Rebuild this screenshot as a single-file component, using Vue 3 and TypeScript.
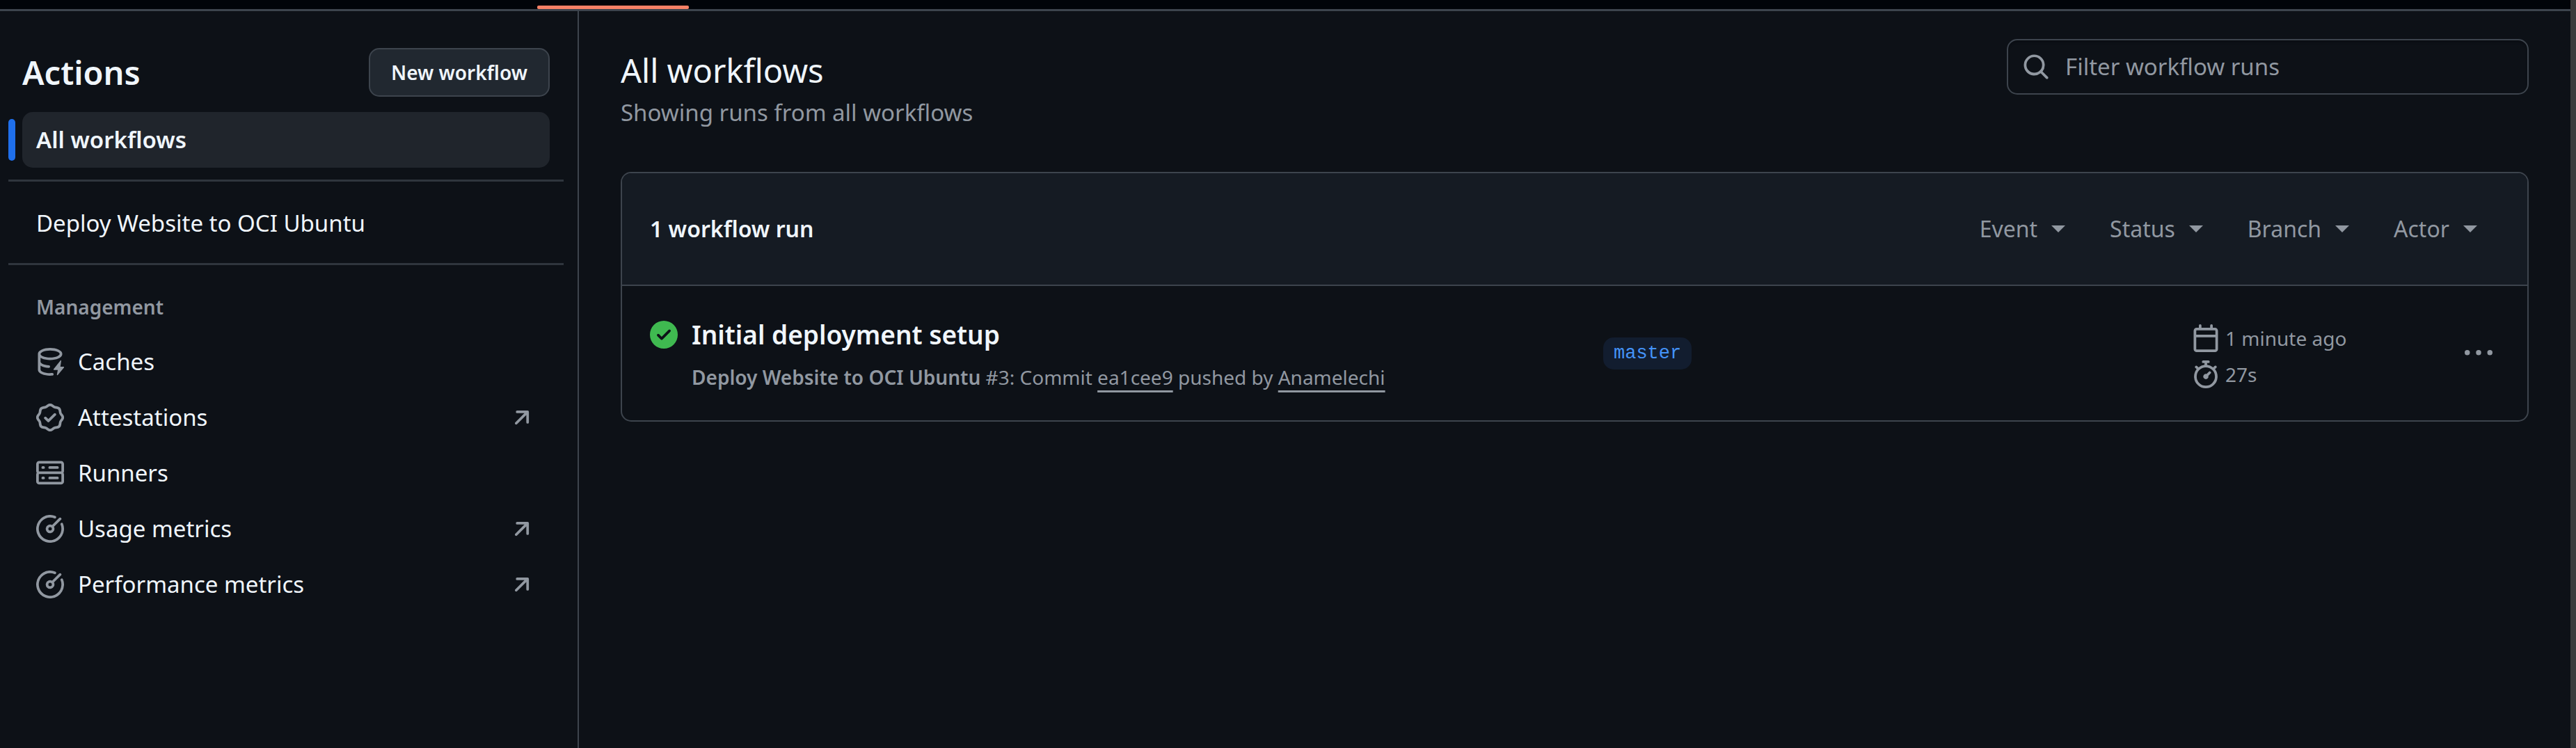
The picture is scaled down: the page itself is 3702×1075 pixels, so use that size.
<script setup lang="ts">
import { ref } from 'vue'

interface ManagementLink {
  label: string
  icon: string
  external: boolean
}

const icons: Record<string, string> = {
  cache:
    'M2.5 5.724V8c0 .248.238.7 1.169 1.159.874.43 2.144.745 3.62.822a.75.75 0 1 1-.078 1.498c-1.622-.085-3.102-.432-4.204-.975a5.565 5.565 0 0 1-.507-.28V12.5c0 .133.058.318.282.551.227.237.591.483 1.101.707 1.015.447 2.47.742 4.117.742.406 0 .802-.018 1.183-.052a.751.751 0 1 1 .134 1.494C8.89 15.98 8.45 16 8 16c-1.805 0-3.475-.32-4.721-.869-.623-.274-1.173-.619-1.579-1.041-.408-.425-.7-.964-.7-1.59v-9c0-.626.292-1.165.7-1.591.406-.42.956-.766 1.579-1.04C4.525.32 6.195 0 8 0c1.806 0 3.476.32 4.721.869.623.274 1.173.619 1.579 1.041.408.425.7.964.7 1.59 0 .626-.292 1.165-.7 1.591-.406.42-.956.766-1.578 1.04C11.475 6.68 9.805 7 8 7c-1.805 0-3.475-.32-4.721-.869a6.15 6.15 0 0 1-.779-.407Zm0-2.224c0 .133.058.318.282.551.227.237.591.483 1.101.707C4.898 5.205 6.353 5.5 8 5.5c1.646 0 3.101-.295 4.118-.742.508-.224.873-.471 1.1-.708.224-.232.282-.417.282-.55 0-.133-.058-.318-.282-.551-.227-.237-.591-.483-1.101-.707C11.102 1.795 9.647 1.5 8 1.5c-1.646 0-3.101.295-4.118.742-.508.224-.873.471-1.1.708-.224.232-.282.417-.282.55Zm11.5 3.7-4 5q-.2.5.3.5h2.1l-.5 2.7q.1.5.5.2l3.6-4.3q.2-.5-.3-.5h-1.8l.5-3.4q-.1-.4-.4-.2Z',
  verified:
    'm9.585.52.929.68c.153.112.331.186.518.215l1.138.175a2.678 2.678 0 0 1 2.24 2.24l.174 1.139c.029.187.103.365.215.518l.68.928a2.677 2.677 0 0 1 0 3.17l-.68.928a1.174 1.174 0 0 0-.215.518l-.175 1.138a2.678 2.678 0 0 1-2.241 2.241l-1.138.175a1.17 1.17 0 0 0-.518.215l-.928.68a2.677 2.677 0 0 1-3.17 0l-.928-.68a1.174 1.174 0 0 0-.518-.215L3.83 14.41a2.678 2.678 0 0 1-2.24-2.24l-.175-1.138a1.17 1.17 0 0 0-.215-.518l-.68-.928a2.677 2.677 0 0 1 0-3.17l.68-.928c.112-.153.186-.331.215-.518l.175-1.14a2.678 2.678 0 0 1 2.24-2.24l1.139-.175c.187-.029.365-.103.518-.215l.928-.68a2.677 2.677 0 0 1 3.17 0ZM7.303 1.728l-.927.68a2.67 2.67 0 0 1-1.18.489l-1.137.174a1.179 1.179 0 0 0-.987.987l-.174 1.136a2.677 2.677 0 0 1-.489 1.18l-.68.928a1.18 1.18 0 0 0 0 1.394l.68.927c.256.348.424.753.489 1.18l.174 1.137c.078.509.478.909.987.987l1.136.174a2.67 2.67 0 0 1 1.18.489l.928.68c.414.305.979.305 1.394 0l.927-.68a2.67 2.67 0 0 1 1.18-.489l1.137-.174a1.18 1.18 0 0 0 .987-.987l.174-1.136a2.67 2.67 0 0 1 .489-1.18l.68-.928a1.176 1.176 0 0 0 0-1.394l-.68-.927a2.686 2.686 0 0 1-.489-1.18l-.174-1.137a1.179 1.179 0 0 0-.987-.987l-1.136-.174a2.677 2.677 0 0 1-1.18-.489l-.928-.68a1.176 1.176 0 0 0-1.394 0ZM11.28 6.78l-3.75 3.75a.75.75 0 0 1-1.06 0L4.72 8.78a.751.751 0 0 1 .018-1.042.751.751 0 0 1 1.042-.018L7 8.94l3.22-3.22a.751.751 0 0 1 1.042.018.751.751 0 0 1 .018 1.042Z',
  server:
    'M1.75 1h12.5c.966 0 1.75.784 1.75 1.75v4c0 .372-.116.717-.314 1 .198.283.314.628.314 1v4a1.75 1.75 0 0 1-1.75 1.75H1.75A1.75 1.75 0 0 1 0 12.75v-4c0-.358.109-.707.314-1a1.739 1.739 0 0 1-.314-1v-4C0 1.784.784 1 1.75 1ZM1.5 2.75v4c0 .138.112.25.25.25h12.5a.25.25 0 0 0 .25-.25v-4a.25.25 0 0 0-.25-.25H1.75a.25.25 0 0 0-.25.25Zm.25 5.75a.25.25 0 0 0-.25.25v4c0 .138.112.25.25.25h12.5a.25.25 0 0 0 .25-.25v-4a.25.25 0 0 0-.25-.25ZM7 4.75A.75.75 0 0 1 7.75 4h4.5a.75.75 0 0 1 0 1.5h-4.5A.75.75 0 0 1 7 4.75ZM7.75 10h4.5a.75.75 0 0 1 0 1.5h-4.5a.75.75 0 0 1 0-1.5ZM3 4.75A.75.75 0 0 1 3.75 4h.5a.75.75 0 0 1 0 1.5h-.5A.75.75 0 0 1 3 4.75ZM3.75 10h.5a.75.75 0 0 1 0 1.5h-.5a.75.75 0 0 1 0-1.5Z',
  meter:
    'M8 1.5a6.5 6.5 0 1 0 6.016 4.035.75.75 0 0 1 1.388-.57 8 8 0 1 1-4.37-4.37.75.75 0 0 1-.569 1.389A6.473 6.473 0 0 0 8 1.5Zm6.28.22a.75.75 0 0 1 0 1.06l-4.063 4.064a2.5 2.5 0 1 1-1.06-1.06L13.22 1.72a.75.75 0 0 1 1.06 0ZM7 8a1 1 0 1 0 2 0 1 1 0 0 0-2 0Z',
  arrow:
    'M4.53 4.75A.75.75 0 0 1 5.28 4h6.01a.75.75 0 0 1 .75.75v6.01a.75.75 0 0 1-1.5 0v-4.2l-5.26 5.261a.749.749 0 0 1-1.275-.326.749.749 0 0 1 .215-.734L9.48 5.5h-4.2a.75.75 0 0 1-.75-.75Z',
  search:
    'M10.68 11.74a6 6 0 0 1-7.922-8.982 6 6 0 0 1 8.982 7.922l3.04 3.04a.749.749 0 0 1-.326 1.275.749.749 0 0 1-.734-.215ZM11.5 7a4.499 4.499 0 1 0-8.997 0A4.499 4.499 0 0 0 11.5 7Z',
  success:
    'M8 16A8 8 0 1 1 8 0a8 8 0 0 1 0 16Zm3.78-9.72a.751.751 0 0 0-.018-1.042.751.751 0 0 0-1.042-.018L6.75 9.19 5.28 7.72a.751.751 0 0 0-1.042.018.751.751 0 0 0-.018 1.042l2 2a.75.75 0 0 0 1.06 0Z',
  calendar:
    'M4.75 0a.75.75 0 0 1 .75.75V2h5V.75a.75.75 0 0 1 1.5 0V2h1.25c.966 0 1.75.784 1.75 1.75v10.5A1.75 1.75 0 0 1 13.25 16H2.75A1.75 1.75 0 0 1 1 14.25V3.75C1 2.784 1.784 2 2.75 2H4V.75A.75.75 0 0 1 4.75 0ZM2.5 7.5v6.75c0 .138.112.25.25.25h10.5a.25.25 0 0 0 .25-.25V7.5Zm10.75-4H2.75a.25.25 0 0 0-.25.25V6h11V3.75a.25.25 0 0 0-.25-.25Z',
  stopwatch:
    'M5.75.75A.75.75 0 0 1 6.5 0h3a.75.75 0 0 1 0 1.5h-.75v1l-.001.041a6.724 6.724 0 0 1 3.464 1.435l.007-.006.75-.75a.749.749 0 0 1 1.275.326.749.749 0 0 1-.215.734l-.75.75-.006.007a6.75 6.75 0 1 1-10.548 0L2.72 5.03l-.75-.75a.751.751 0 0 1 .018-1.042.751.751 0 0 1 1.042-.018l.75.75.007.006A6.72 6.72 0 0 1 7.25 2.541V1.5H6.5a.75.75 0 0 1-.75-.75ZM8 14.5a5.25 5.25 0 1 0-.001-10.501A5.25 5.25 0 0 0 8 14.5Zm.389-6.7 1.33-1.33a.75.75 0 1 1 1.061 1.06L9.45 8.861A1.503 1.503 0 0 1 8 10.75a1.499 1.499 0 1 1 .389-2.95Z',
  kebab:
    'M8 9a1.5 1.5 0 1 0 0-3 1.5 1.5 0 0 0 0 3ZM1.5 9a1.5 1.5 0 1 0 0-3 1.5 1.5 0 0 0 0 3Zm13 0a1.5 1.5 0 1 0 0-3 1.5 1.5 0 0 0 0 3Z',
}

const management: ManagementLink[] = [
  { label: 'Caches', icon: 'cache', external: false },
  { label: 'Attestations', icon: 'verified', external: true },
  { label: 'Runners', icon: 'server', external: false },
  { label: 'Usage metrics', icon: 'meter', external: true },
  { label: 'Performance metrics', icon: 'meter', external: true },
]

const filters: string[] = ['Event', 'Status', 'Branch', 'Actor']
const query = ref('')
</script>

<template>
  <div class="window">
    <div class="page">
      <div class="tabs"><span class="tab-marker"></span></div>
      <div class="body">
        <aside class="sidebar">
          <header class="side-head">
            <h2 class="side-title">Actions</h2>
            <button type="button" class="new-button">New workflow</button>
          </header>
          <nav class="side-nav" aria-label="Actions">
            <a href="#" class="item current" aria-current="page">All workflows</a>
            <hr class="divider" />
            <a href="#" class="item">Deploy Website to OCI Ubuntu</a>
            <hr class="divider" />
            <h3 class="group-title">Management</h3>
            <a v-for="link in management" :key="link.label" href="#" class="item">
              <svg class="icon" viewBox="0 0 16 16" aria-hidden="true"><path :d="icons[link.icon]" /></svg>
              <span class="item-label">{{ link.label }}</span>
              <svg v-if="link.external" class="icon" viewBox="0 0 16 16" aria-hidden="true">
                <path :d="icons.arrow" />
              </svg>
            </a>
          </nav>
        </aside>

        <main class="main">
          <header class="main-head">
            <div class="headings">
              <h1 class="title">All workflows</h1>
              <p class="subtitle">Showing runs from all workflows</p>
            </div>
            <label class="search">
              <svg class="icon" viewBox="0 0 16 16" aria-hidden="true"><path :d="icons.search" /></svg>
              <input
                v-model="query"
                class="search-input"
                type="text"
                placeholder="Filter workflow runs"
                aria-label="Filter workflow runs"
              />
            </label>
          </header>

          <section class="runs">
            <header class="runs-head">
              <strong class="count">1 workflow run</strong>
              <div class="filters">
                <button v-for="name in filters" :key="name" type="button" class="filter">
                  {{ name }}<span class="caret"></span>
                </button>
              </div>
            </header>
            <article class="run">
              <div class="run-info">
                <svg class="icon success" viewBox="0 0 16 16" role="img" aria-label="completed successfully">
                  <path :d="icons.success" />
                </svg>
                <div class="run-text">
                  <a href="#" class="run-title">Initial deployment setup</a>
                  <p class="run-meta">
                    <strong>Deploy Website to OCI Ubuntu</strong> #3: Commit <a href="#">ea1cee9</a> pushed by
                    <a href="#">Anamelechi</a>
                  </p>
                </div>
              </div>
              <div class="run-branch"><a href="#" class="branch">master</a></div>
              <div class="run-times">
                <div class="time">
                  <svg class="icon" viewBox="0 0 16 16" aria-hidden="true"><path :d="icons.calendar" /></svg>
                  <span>1 minute ago</span>
                </div>
                <div class="time">
                  <svg class="icon" viewBox="0 0 16 16" aria-hidden="true"><path :d="icons.stopwatch" /></svg>
                  <span>27s</span>
                </div>
              </div>
              <button type="button" class="menu" aria-label="Show options">
                <svg class="icon" viewBox="0 0 16 16" aria-hidden="true"><path :d="icons.kebab" /></svg>
              </button>
            </article>
          </section>
        </main>
      </div>
    </div>
    <div class="scrollbar"></div>
  </div>
</template>

<style>
body {
  margin: 0;
  background: #0d1117;
}
</style>

<style scoped>
* {
  box-sizing: border-box;
}

.window {
  display: flex;
  min-height: 100vh;
  background: #0d1117;
  color: #f0f6fc;
  font-family: 'Noto Sans', 'Open Sans', sans-serif;
  font-size: 33px;
  line-height: 50px;
}

.page {
  display: flex;
  flex: 1;
  flex-direction: column;
  min-width: 0;
}

.scrollbar {
  width: 8px;
  background: #3b3b3b;
}

.tabs {
  display: flex;
  align-items: flex-end;
  height: 16px;
  padding-left: 772px;
  border-bottom: 3px solid #3d444d;
  background: #010409;
}

.tab-marker {
  width: 218px;
  height: 5px;
  border-radius: 2px;
  background: #f78166;
}

.body {
  display: flex;
  flex: 1;
}

.sidebar {
  flex: none;
  width: 832px;
  padding-top: 53px;
  border-right: 2px solid #3d444d;
}

.side-head {
  display: flex;
  align-items: center;
  justify-content: space-between;
  padding: 0 40px 0 32px;
}

.side-title {
  margin: 0;
  font-size: 47px;
  font-weight: 600;
  line-height: 60px;
}

.new-button {
  height: 70px;
  padding: 0 30px;
  border: 2px solid #3d444d;
  border-radius: 15px;
  background: #212830;
  color: #f0f6fc;
  font-family: inherit;
  font-size: 28px;
  font-weight: 600;
}

.side-nav {
  padding: 22px 20px 0 12px;
}

.item {
  position: relative;
  display: flex;
  align-items: center;
  gap: 20px;
  height: 80px;
  margin: 0 20px;
  padding: 0 20px;
  border-radius: 15px;
  color: #f0f6fc;
  text-decoration: none;
}

.item-label {
  flex: 1;
}

.current {
  background: #20252c;
  font-weight: 600;
}

.current::before {
  position: absolute;
  top: 10px;
  left: -20px;
  width: 10px;
  height: 60px;
  border-radius: 5px;
  background: #1f6feb;
  content: '';
}

.divider {
  height: 3px;
  margin: 17px 0 20px;
  border: 0;
  background: #2f353d;
}

.group-title {
  margin: 38px 40px 17px;
  color: #9198a1;
  font-size: 28px;
  font-weight: 600;
  line-height: 44px;
}

.icon {
  flex: none;
  width: 40px;
  height: 40px;
  fill: #9198a1;
}

.main {
  flex: 1;
  min-width: 0;
  padding: 40px 60px;
}

.main-head {
  display: flex;
  align-items: flex-start;
  justify-content: space-between;
}

.headings {
  padding-top: 15px;
}

.title {
  margin: 0 0 6px;
  font-size: 47px;
  font-weight: 400;
  line-height: 60px;
}

.subtitle {
  margin: 0;
  color: #9198a1;
}

.search {
  display: flex;
  align-items: center;
  gap: 22px;
  width: 750px;
  height: 80px;
  padding: 0 20px;
  border: 2px solid #3d444d;
  border-radius: 15px;
  box-shadow: inset 0 3px 3px rgba(1, 4, 9, 0.24);
}

.search-input {
  flex: 1;
  min-width: 0;
  padding: 0;
  border: 0;
  outline: 0;
  background: transparent;
  color: #f0f6fc;
  font: inherit;
}

.search-input::placeholder {
  color: #9198a1;
  opacity: 1;
}

.runs {
  margin-top: 60px;
  border: 2px solid #3d444d;
  border-radius: 15px;
}

.runs-head {
  display: flex;
  align-items: center;
  justify-content: space-between;
  padding: 55px 72px 55px 40px;
  border-bottom: 2px solid #3d444d;
  border-radius: 13px 13px 0 0;
  background: #151b23;
  font-size: 32px;
}

.count {
  font-weight: 600;
}

.filters {
  display: flex;
  gap: 64px;
}

.filter {
  display: flex;
  align-items: center;
  gap: 20px;
  padding: 0;
  border: 0;
  background: none;
  color: #9198a1;
  font: inherit;
}

.caret {
  border: 10px solid transparent;
  border-top-color: #9198a1;
  border-bottom: 0;
}

.run {
  display: grid;
  grid-template-columns: 1370fr 846fr 392fr 40px;
  align-items: center;
  padding: 40px 50px 40px 40px;
}

.run-info {
  display: flex;
  gap: 20px;
}

.success {
  margin-top: 10px;
  fill: #3fb950;
}

.run-title {
  display: block;
  color: #f0f6fc;
  font-size: 37px;
  font-weight: 600;
  line-height: 60px;
  text-decoration: none;
}

.run-meta {
  margin: 9px 0 0;
  color: #9198a1;
  font-size: 28px;
  line-height: 44px;
}

.run-meta strong {
  font-weight: 600;
}

.run-meta a {
  color: inherit;
  text-decoration: underline 3px;
  text-underline-offset: 8px;
}

.branch {
  display: inline-block;
  padding: 0 15px;
  border-radius: 15px;
  background: #121d2f;
  color: #4493f8;
  font-family: 'Liberation Mono', monospace;
  font-size: 27px;
  line-height: 46px;
  text-decoration: none;
}

.run-branch {
  display: flex;
}

.run-times {
  padding-top: 8px;
  color: #9198a1;
  font-size: 28px;
}

.time {
  display: flex;
  align-items: center;
  gap: 8px;
  height: 52px;
}

.menu {
  display: flex;
  padding: 0;
  border: 0;
  background: none;
}
</style>
